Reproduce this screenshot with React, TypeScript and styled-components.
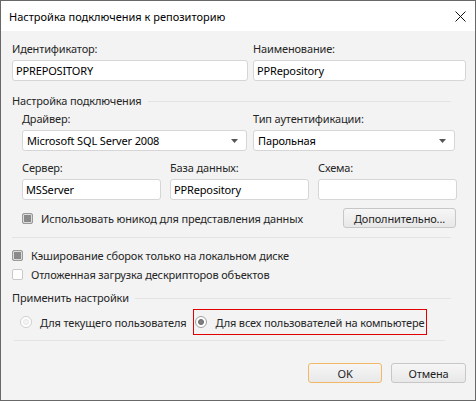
import styled, { createGlobalStyle } from "styled-components";

const GlobalStyle = createGlobalStyle`
    html, body {
        margin: 0;
        padding: 0;
        background: #ffffff;
    }
    body {
        font-family: "Noto Sans", "Open Sans", sans-serif;
        font-size: 11px;
        letter-spacing: -0.15px;
        color: #1f1f1f;
    }
    * {
        box-sizing: border-box;
    }
`;

const CloseIcon = () => (
    <svg width="11" height="11" viewBox="0 0 11 11">
        <path d="M0.5 0.5 L10.5 10.5 M10.5 0.5 L0.5 10.5" stroke="#111" strokeWidth="1" />
    </svg>
);

const ArrowDown = () => (
    <svg width="7" height="4" viewBox="0 0 7 4">
        <path d="M0 0 H7 L3.5 4 Z" fill="#555" />
    </svg>
);

const TextField = ({ label, value }: { label: string; value?: string }) => (
    <Field>
        <Label>{label}</Label>
        <Input>{value}</Input>
    </Field>
);

const ComboField = ({ label, value }: { label: string; value: string }) => (
    <Field>
        <Label>{label}</Label>
        <Combo>
            <span>{value}</span>
            <ArrowDown />
        </Combo>
    </Field>
);

export default function App() {
    return (
        <>
            <GlobalStyle />
            <Window>
                <TitleBar>
                    <span>Настройка подключения к репозиторию</span>
                    <CloseIcon />
                </TitleBar>
                <Body>
                    <TopRow>
                        <TextField label="Идентификатор:" value="PPREPOSITORY" />
                        <TextField label="Наименование:" value="PPRepository" />
                    </TopRow>

                    <GroupHeader $top={12}>
                        <span>Настройка подключения</span>
                        <HeaderLine />
                    </GroupHeader>
                    <Group>
                        <DriverRow>
                            <ComboField label="Драйвер:" value="Microsoft SQL Server 2008" />
                            <ComboField label="Тип аутентификации:" value="Парольная" />
                        </DriverRow>
                        <ServerRow>
                            <TextField label="Сервер:" value="MSServer" />
                            <TextField label="База данных:" value="PPRepository" />
                            <TextField label="Схема:" />
                        </ServerRow>
                        <OptionsRow>
                            <Check>
                                <CheckBox $checked />
                                Использовать юникод для представления данных
                            </Check>
                            <Button $width={113}>Дополнительно...</Button>
                        </OptionsRow>
                    </Group>

                    <Separator $top={9} $left={0} $right={16} />

                    <Check $top={10}>
                        <CheckBox $checked />
                        Кэширование сборок только на локальном диске
                    </Check>
                    <Check $top={4}>
                        <CheckBox />
                        Отложенная загрузка дескрипторов объектов
                    </Check>

                    <GroupHeader $top={8}>
                        <span>Применить настройки</span>
                        <HeaderLine />
                    </GroupHeader>
                    <RadioRow>
                        <Radio>
                            <RadioDot />
                            Для текущего пользователя
                        </Radio>
                        <Highlight>
                            <Radio>
                                <RadioDot $checked />
                                Для всех пользователей на компьютере
                            </Radio>
                        </Highlight>
                    </RadioRow>

                    <Separator $top={5} $left={2} $right={22} />

                    <Footer>
                        <Button $width={74} $default>
                            OK
                        </Button>
                        <Button $width={75}>Отмена</Button>
                    </Footer>
                </Body>
            </Window>
        </>
    );
}

const Window = styled.div`
    display: flex;
    flex-direction: column;
    width: 476px;
    height: 401px;
    border: 1px solid #686868;
    background: #f3f3f3;
`;

const TitleBar = styled.div`
    display: flex;
    align-items: center;
    justify-content: space-between;
    height: 30px;
    padding: 0 9px 0 8px;
    background: #ffffff;
    color: #000000;
    font-size: 11px;
    letter-spacing: 0;
    line-height: 15px;
`;

const Body = styled.div`
    flex: 1;
    display: flex;
    flex-direction: column;
    padding: 10px 8px 0 11px;
`;

const Field = styled.div`
    display: flex;
    flex-direction: column;
    gap: 4px;
    min-width: 0;
`;

const Label = styled.div`
    line-height: 15px;
    color: #262626;
    white-space: nowrap;
`;

const Input = styled.div`
    height: 21px;
    padding: 0 3px;
    border: 1px solid #d6d6d6;
    border-radius: 3px;
    background: #ffffff;
    line-height: 19px;
    color: #000000;
    white-space: nowrap;
`;

const Combo = styled(Input)`
    display: flex;
    align-items: center;
    justify-content: space-between;
    padding: 0 8px 0 4px;
`;

const TopRow = styled.div`
    display: grid;
    grid-template-columns: 236px 213px;
    column-gap: 5px;
`;

const GroupHeader = styled.div<{ $top: number }>`
    display: flex;
    align-items: center;
    margin-top: ${({ $top }) => $top}px;
    line-height: 15px;
    color: #262626;
`;

const HeaderLine = styled.div`
    flex: 1;
    height: 1px;
    margin: 1px 16px 0 6px;
    background: #e3e3e3;
`;

const Group = styled.div`
    display: flex;
    flex-direction: column;
    padding: 0 11px 0 10px;
`;

const DriverRow = styled.div`
    display: grid;
    grid-template-columns: 225px 202px;
    column-gap: 6px;
    margin-top: 3px;
`;

const ServerRow = styled.div`
    display: grid;
    grid-template-columns: 139px 139px 139px;
    column-gap: 9px;
    margin-top: 9px;
`;

const OptionsRow = styled.div`
    display: flex;
    align-items: center;
    justify-content: space-between;
    margin-top: 8px;
`;

const Check = styled.div<{ $top?: number }>`
    display: flex;
    align-items: center;
    gap: 8px;
    margin-top: ${({ $top = 0 }) => $top}px;
    line-height: 15px;
    color: #262626;
    white-space: nowrap;
`;

const CheckBox = styled.span<{ $checked?: boolean }>`
    flex: none;
    width: 11px;
    height: 11px;
    border-radius: 2px;
    border: 1px solid ${({ $checked }) => ($checked ? "#9a9a9a" : "#c9c9c9")};
    background: ${({ $checked }) => ($checked ? "#8a8a8a" : "#ffffff")};
    box-shadow: ${({ $checked }) =>
        $checked ? "inset 0 0 0 1px #dcdcdc" : "none"};
`;

const Button = styled.div<{ $width: number; $default?: boolean }>`
    display: flex;
    align-items: center;
    justify-content: center;
    width: ${({ $width }) => $width}px;
    height: 20px;
    border: 1px solid ${({ $default }) => ($default ? "#f2b866" : "#c7c7c7")};
    border-radius: 3px;
    background: linear-gradient(#f6f6f6, #e8e8e8);
    color: #1f1f1f;
    line-height: 15px;
    white-space: nowrap;
`;

const Separator = styled.div<{ $top: number; $left: number; $right: number }>`
    height: 1px;
    margin: ${({ $top, $left, $right }) => `${$top}px ${$right}px 0 ${$left}px`};
    background: #e3e3e3;
`;

const RadioRow = styled.div`
    display: flex;
    align-items: center;
    gap: 7px;
    margin-top: 4px;
    padding-left: 8px;
`;

const Radio = styled.div`
    display: flex;
    align-items: center;
    gap: 8px;
    line-height: 15px;
    color: #262626;
    white-space: nowrap;
`;

const RadioDot = styled.span<{ $checked?: boolean }>`
    position: relative;
    flex: none;
    width: 12px;
    height: 12px;
    border-radius: 50%;
    border: 1px solid ${({ $checked }) => ($checked ? "#a0a0a0" : "#cfcfcf")};
    background: #ffffff;

    &::after {
        content: "";
        position: absolute;
        inset: 2px;
        border-radius: 50%;
        background: ${({ $checked }) => ($checked ? "#808080" : "#f4f4f4")};
        border: 1px solid ${({ $checked }) => ($checked ? "#6a6a6a" : "#e6e6e6")};
    }
`;

const Highlight = styled.div`
    display: flex;
    align-items: center;
    width: 234px;
    height: 26px;
    padding-left: 1px;
    border: 1px solid #e20000;
`;

const Footer = styled.div`
    display: flex;
    justify-content: flex-end;
    gap: 9px;
    margin-top: 22px;
    padding-right: 1px;
`;
